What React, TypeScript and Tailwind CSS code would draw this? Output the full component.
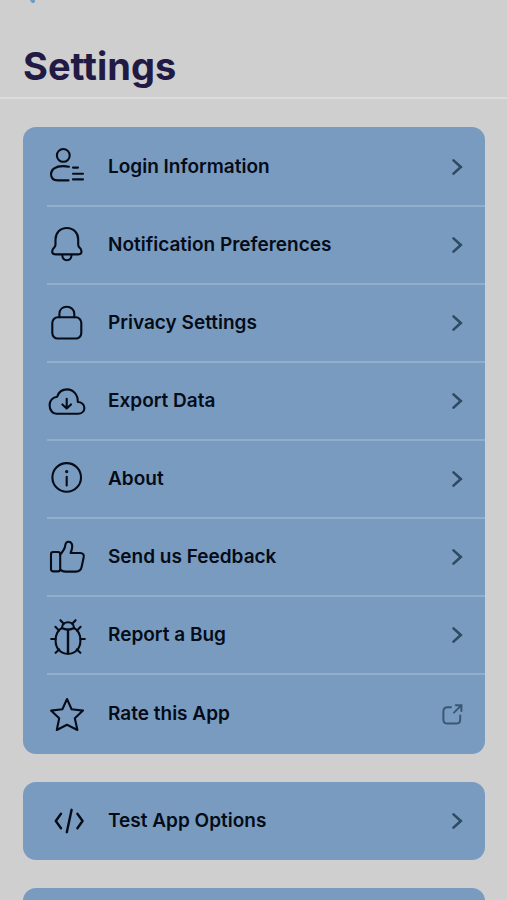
import type { ReactNode } from "react";

type SettingsItem = {
  label: string;
  icon: ReactNode;
  external?: boolean;
};

const accountItems: SettingsItem[] = [
  {
    label: "Login Information",
    icon: (
      <>
        <circle cx="16.3" cy="8.4" r="6.4" />
        <path d="M22 19.8C20 19.3 18.2 19.1 16 19.1C8.5 19.1 4 22.3 4 27.1C4 31.4 6.8 33.4 11 33.4H21.5" />
        <path d="M26 20.6H31M26 26.8H36M26 32.4H36" />
      </>
    ),
  },
  {
    label: "Notification Preferences",
    icon: (
      <>
        <path d="M19.8 3C13 3 8.5 8 8.5 14.5V19.5C8.5 21 8 21.7 7.2 22.6C6 23.8 5.2 25 5.2 26.4C5.2 28.2 6.5 29.4 8.5 29.4H31.2C33.2 29.4 34.5 28.2 34.5 26.4C34.5 25 33.7 23.8 32.5 22.6C31.6 21.7 31.2 21 31.2 19.5V14.5C31.2 8 26.6 3 19.8 3Z" />
        <path d="M15.3 30.5C15.6 33.6 17.2 35.2 19.9 35.2C22.6 35.2 24.2 33.6 24.5 30.5" />
      </>
    ),
  },
  {
    label: "Privacy Settings",
    icon: (
      <>
        <rect x="5.3" y="14.3" width="29" height="21.2" rx="5.5" />
        <path d="M12.4 14.2V10.9C12.4 6.5 15.6 3.7 19.8 3.7C24 3.7 27.3 6.5 27.3 10.9V14.2" />
      </>
    ),
  },
  {
    label: "Export Data",
    icon: (
      <>
        <path d="M9.5 32.8H31C34.8 32.8 37.4 30.2 37.4 27C37.4 23.6 34.6 21 30.8 21C31 13.6 26.2 8.4 20 8.4C15 8.4 11.6 11.2 10.2 15.7C5.8 16.4 2.6 19.6 2.6 24.2C2.6 29.4 5.8 32.8 9.5 32.8Z" />
        <path d="M19.7 17.8V27.4M15.4 23.4L19.7 27.6L24 23.4" />
      </>
    ),
  },
  {
    label: "About",
    icon: (
      <>
        <circle cx="19.7" cy="18.4" r="14.3" />
        <path d="M19.7 17.8V26.4" />
        <circle cx="19.7" cy="12.6" r="0.6" fill="currentColor" />
      </>
    ),
  },
  {
    label: "Send us Feedback",
    icon: (
      <>
        <path d="M13.2 17.5C17 13.5 18 11.5 18.3 8.2C18.5 5.8 20 4.6 21.8 4.8C24.2 5.1 25.4 7.2 25.2 10C25.1 12.2 24.4 14 23.6 16H33.2C36 16 37.2 17.6 36.7 20.2L34.6 30C33.9 33 32 34.6 29 34.6H18.5C16.3 34.6 14.8 34 13.2 32.6" />
        <rect x="4" y="15" width="9.2" height="19.4" rx="2.2" />
      </>
    ),
  },
  {
    label: "Report a Bug",
    icon: (
      <>
        <path d="M15 13C10.8 15.2 8.6 19.6 8.6 25.4C8.6 33.4 13.6 38.8 21 38.8C28.4 38.8 33.4 33.4 33.4 25.4C33.4 19.6 31.2 15.2 27 13" />
        <path d="M15 13C15 9.6 17.6 7.2 21 7.2C24.4 7.2 27 9.6 27 13C25.4 14 23.4 14.6 21 14.6C18.6 14.6 16.6 14 15 13Z" />
        <path strokeWidth="2.4" d="M21 14.8V38.4" />
        <path d="M13.4 5.2L16.8 8.8M28.6 5.2L25.2 8.8M8.4 11.8L12 15.6M33.6 11.8L30 15.6M4.2 24H8.6M37.8 24H33.4M8.6 37.8L12.2 34.4M33.4 37.8L29.8 34.4" />
      </>
    ),
  },
  {
    label: "Rate this App",
    external: true,
    icon: (
      <path d="M20 5L24.6 15.2L36 16.6L27.8 24.2L30.4 36L20 30.8L9.8 36L12.2 24.2L4 16.6L15.4 15.2Z" />
    ),
  },
];

const developerItems: SettingsItem[] = [
  {
    label: "Test App Options",
    icon: (
      <path
        strokeWidth="2.4"
        d="M14 12.8L8.8 20L14 27.2M24.6 8.8L19.8 31.2M30.4 12.8L35.6 20L30.4 27.2"
      />
    ),
  },
];

function ChevronIcon() {
  return (
    <svg
      aria-hidden="true"
      viewBox="0 0 12 18"
      className="h-[18px] w-3 shrink-0 text-[#2f4a63]"
      fill="none"
      stroke="currentColor"
      strokeWidth="2.6"
      strokeLinecap="round"
    >
      <path d="M2.5 2.4L9.8 9L2.5 15.6" />
    </svg>
  );
}

function ExternalIcon() {
  return (
    <svg
      aria-hidden="true"
      viewBox="0 0 22 22"
      className="size-[22px] shrink-0 text-[#3a5876]"
      fill="none"
      stroke="currentColor"
      strokeWidth="2"
      strokeLinecap="round"
    >
      <path d="M10 4.2H6.8C4.2 4.2 2.4 5.8 2.4 8.4V16.4C2.4 19 4.2 20.6 6.8 20.6H15C17.6 20.6 19.2 19 19.2 16.4V12.6" />
      <path d="M13 9.6L20 2.6M14.8 2.2H20.4V8" />
    </svg>
  );
}

function SettingsRow({ item }: { item: SettingsItem }) {
  return (
    <li className="ml-6 flex min-h-[78px] border-b-2 border-[#91afcd] last:border-b-0">
      <button
        type="button"
        className="flex flex-1 items-center gap-[21px] pr-[22px] text-left"
      >
        <svg
          aria-hidden="true"
          viewBox="0 0 40 40"
          className="size-10 shrink-0 overflow-visible"
          fill="none"
          stroke="currentColor"
          strokeWidth="2.1"
          strokeLinecap="round"
          strokeLinejoin="round"
        >
          {item.icon}
        </svg>
        <span className="flex-1 text-[19px] leading-6 font-semibold">
          {item.label}
        </span>
        {item.external ? <ExternalIcon /> : <ChevronIcon />}
      </button>
    </li>
  );
}

function SettingsCard({
  items,
  className = "",
}: {
  items: SettingsItem[];
  className?: string;
}) {
  return (
    <ul className={`rounded-[13px] bg-[#799bc0] ${className}`}>
      {items.map((item) => (
        <SettingsRow key={item.label} item={item} />
      ))}
    </ul>
  );
}

export default function App() {
  return (
    <div className="h-screen overflow-hidden bg-[#cfcfcf] font-['Inter',sans-serif] text-[#050c18]">
      <header className="border-b-2 border-[#dcdcdc] px-[23px] pb-[7px]">
        <button
          type="button"
          aria-label="Back"
          className="-mt-[21px] block text-[#6f9cc4]"
        >
          <svg
            aria-hidden="true"
            viewBox="0 0 16 24"
            className="h-6 w-4"
            fill="none"
            stroke="currentColor"
            strokeWidth="4"
            strokeLinecap="round"
          >
            <path d="M11 2L3 12L10 22" />
          </svg>
        </button>
        <h1 className="mt-[39px] text-[38px] leading-[48px] font-bold text-[#211a44]">
          Settings
        </h1>
      </header>
      <main className="grid gap-7 pt-7 pr-[22px] pl-[23px]">
        <SettingsCard items={accountItems} className="pt-0.5 pb-px" />
        <SettingsCard items={developerItems} />
        <div className="h-20 rounded-[13px] bg-[#799bc0]" />
      </main>
    </div>
  );
}
